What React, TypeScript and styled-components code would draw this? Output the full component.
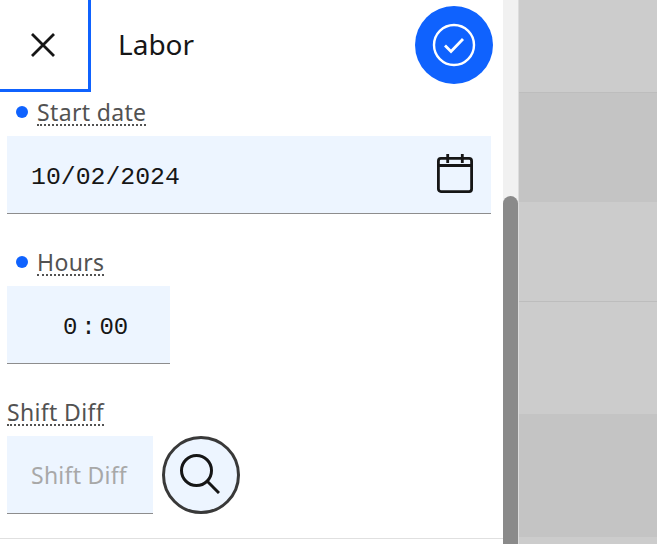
import React from "react";
import styled, { createGlobalStyle } from "styled-components";

const Global = createGlobalStyle`
  html, body { margin: 0; padding: 0; background: #fff; overflow: hidden; }
  #root { width: 657px; height: 544px; overflow: hidden; }
  * { box-sizing: border-box; }
`;

const Page = styled.div`
  display: flex;
  width: 657px;
  height: 544px;
  overflow: hidden;
  font-family: "Noto Sans", "Liberation Sans", sans-serif;
`;

const Panel = styled.div`
  width: 503px;
  height: 544px;
  display: flex;
  flex-direction: column;
  background: #fff;
`;

const Header = styled.header`
  display: flex;
  align-items: flex-start;
  height: 93px;
  flex: none;
`;

const CloseButton = styled.button`
  width: 91px;
  height: 92px;
  flex: none;
  display: flex;
  align-items: center;
  justify-content: center;
  padding: 0 2px 0 0;
  background: #fff;
  border: 0;
  border-right: 3px solid #0f62fe;
  border-bottom: 3px solid #0f62fe;
`;

const Title = styled.h1`
  margin: 0 0 0 27px;
  flex: 1;
  font-size: 28px;
  line-height: 88px;
  font-weight: 400;
  color: #161616;
`;

const ConfirmButton = styled.button`
  width: 78px;
  height: 78px;
  margin: 6px 10px 0 0;
  flex: none;
  display: flex;
  align-items: center;
  justify-content: center;
  padding: 0;
  border: 0;
  border-radius: 50%;
  background: #0f62fe;
`;

const Field = styled.section<{ $gap: number; $top?: number }>`
  display: flex;
  flex-direction: column;
  padding-left: 7px;
  margin-top: ${(p) => p.$top ?? 0}px;
  margin-bottom: ${(p) => p.$gap}px;
`;

const LabelRow = styled.div<{ $required?: boolean }>`
  display: flex;
  align-items: center;
  height: 43px;
  padding-left: ${(p) => (p.$required ? 9 : 0)}px;
`;

const Dot = styled.span`
  width: 12px;
  height: 12px;
  margin: 0 9px 5px 0;
  border-radius: 50%;
  background: #0f62fe;
`;

const Label = styled.span`
  font-size: 23px;
  line-height: 26px;
  letter-spacing: 0.35px;
  color: #525252;
  border-bottom: 2px dotted #525252;
  height: 27px;
  margin-bottom: 4px;
`;

const InputBox = styled.div<{ $width: number }>`
  width: ${(p) => p.$width}px;
  height: 78px;
  display: flex;
  align-items: center;
  background: #edf5ff;
  border-bottom: 1px solid #8d8d8d;
`;

const DateValue = styled.span`
  flex: 1;
  padding: 4px 0 0 24px;
  font-family: "Liberation Mono", "DejaVu Sans Mono", monospace;
  font-size: 24.8px;
  color: #161616;
`;

const CalendarWrap = styled.span`
  display: flex;
  margin: 0 18px 3px 0;
`;

const TimeValue = styled.div`
  display: flex;
  align-items: center;
  padding: 5px 0 0 56px;
  font-family: "Liberation Mono", "DejaVu Sans Mono", monospace;
  font-size: 24px;
  color: #161616;
`;

const TimeColon = styled.span`
  width: 22px;
  text-align: center;
`;

const LookupRow = styled.div`
  display: flex;
  align-items: center;
  gap: 9px;
`;

const Placeholder = styled.span`
  padding-left: 24px;
  font-size: 23px;
  letter-spacing: 0.25px;
  color: #a8a8a8;
`;

const SearchButton = styled.button`
  width: 78px;
  height: 78px;
  flex: none;
  display: flex;
  align-items: center;
  justify-content: center;
  padding: 0 2px 3px 0;
  background: #edf5ff;
  border: 3px solid #393939;
  border-radius: 50%;
`;

const Divider = styled.hr`
  margin: 0;
  border: 0;
  border-top: 1px solid #e0e0e0;
`;

const Scrollbar = styled.div`
  width: 16px;
  height: 544px;
  flex: none;
  padding-top: 196px;
  background: #f1f1f1;
  border-right: 1px solid #dcdcdc;
`;

const Thumb = styled.div`
  width: 15px;
  height: 348px;
  border-radius: 8px 8px 0 0;
  background: #8a8a8a;
`;

const Backdrop = styled.div`
  flex: 1;
  display: flex;
  flex-direction: column;
`;

const Band = styled.div<{ $h: number; $dark?: boolean; $line?: boolean }>`
  height: ${(p) => p.$h}px;
  flex: none;
  background: ${(p) => (p.$dark ? "#c4c4c4" : "#cccccc")};
  border-bottom: ${(p) => (p.$line ? "1px solid #bdbdbd" : "0")};
`;

export default function App() {
  return (
    <Page>
      <Global />
      <Panel>
        <Header>
          <CloseButton aria-label="Close">
            <svg width="26" height="26" viewBox="0 0 26 26" fill="none" stroke="#161616" strokeWidth="2.8">
              <path d="M2 2 L24 24 M24 2 L2 24" />
            </svg>
          </CloseButton>
          <Title>Labor</Title>
          <ConfirmButton aria-label="Confirm">
            <svg width="44" height="44" viewBox="0 0 44 44" fill="none" stroke="#fff" strokeWidth="2.4">
              <circle cx="22" cy="22" r="20" />
              <path d="M13 22.5 L19 28.5 L31 16" strokeWidth="2.8" />
            </svg>
          </ConfirmButton>
        </Header>
        <Field $gap={0}>
          <LabelRow $required>
            <Dot />
            <Label>Start date</Label>
          </LabelRow>
          <InputBox $width={484}>
            <DateValue>10/02/2024</DateValue>
            <CalendarWrap>
              <svg width="36" height="39" viewBox="0 0 36 39" fill="none" stroke="#161616" strokeWidth="2.8">
                <rect x="1.4" y="4.4" width="33.2" height="33.2" rx="2.5" />
                <path d="M1.4 11.5 H34.6 M10.7 0 V9 M25.3 0 V9" />
              </svg>
            </CalendarWrap>
          </InputBox>
        </Field>
        <Field $gap={0} $top={29}>
          <LabelRow $required>
            <Dot />
            <Label>Hours</Label>
          </LabelRow>
          <InputBox $width={163}>
            <TimeValue>
              <span>0</span>
              <TimeColon>:</TimeColon>
              <span>00</span>
            </TimeValue>
          </InputBox>
        </Field>
        <Field $gap={24} $top={29}>
          <LabelRow>
            <Label>Shift Diff</Label>
          </LabelRow>
          <LookupRow>
            <InputBox $width={146}>
              <Placeholder>Shift Diff</Placeholder>
            </InputBox>
            <SearchButton aria-label="Search">
              <svg width="40" height="40" viewBox="0 0 40 40" fill="none" stroke="#161616" strokeWidth="3">
                <circle cx="16.5" cy="16.5" r="15" />
                <path d="M27.5 27.5 L39 39" />
              </svg>
            </SearchButton>
          </LookupRow>
        </Field>
        <Divider />
      </Panel>
      <Scrollbar>
        <Thumb />
      </Scrollbar>
      <Backdrop>
        <Band $h={93} $line />
        <Band $h={109} $dark />
        <Band $h={100} $line />
        <Band $h={112} />
        <Band $h={123} $dark />
        <Band $h={7} />
      </Backdrop>
    </Page>
  );
}
